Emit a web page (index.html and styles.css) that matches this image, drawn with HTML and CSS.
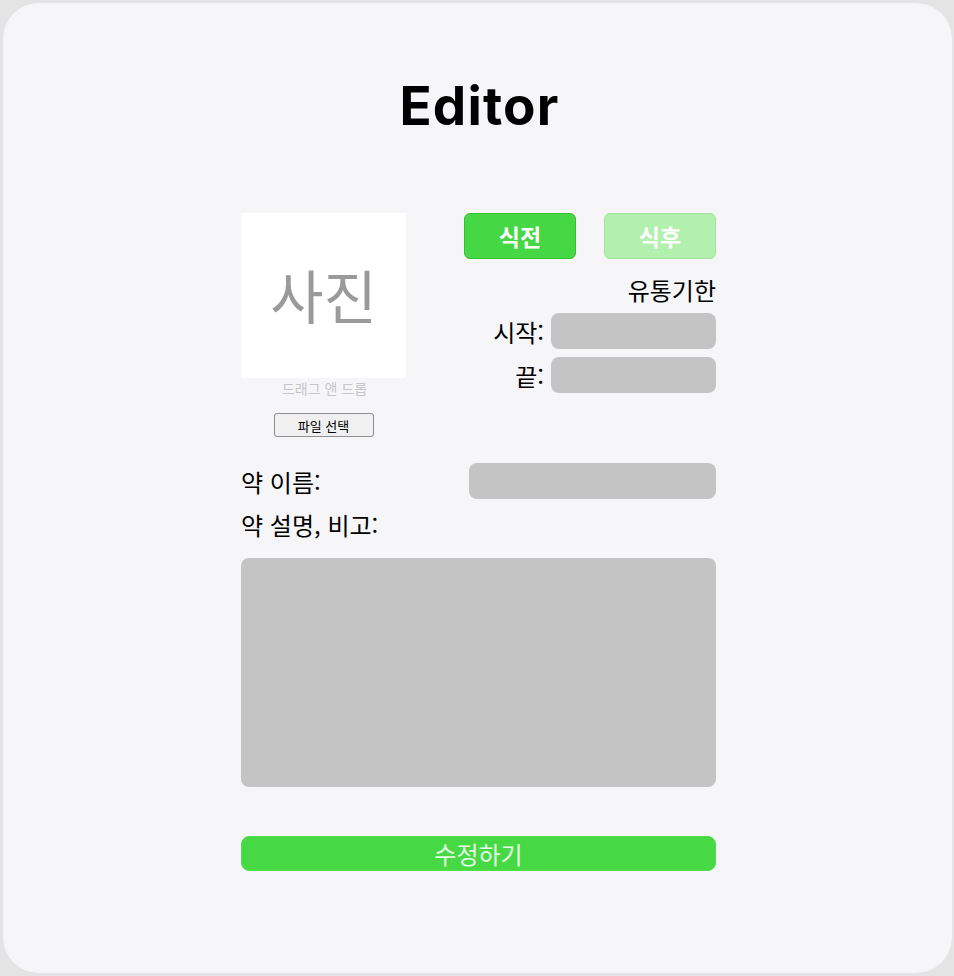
FILE: index.html
```html
<!DOCTYPE html>
<html lang="ko">

<head>
    <meta charset="UTF-8">
    <meta name="viewport" content="width=device-width, initial-scale=1.0">
    <title>Editor</title>
    <link rel="stylesheet" href="styles.css">
</head>

<body>
    <div class="card">
        <h1 class="title">Editor</h1>

        <div class="editor">
            <!-- 사진 + 복용 시점 + 유통기한 -->
            <div class="top">
                <div class="photo-col">
                    <div class="photo">사진</div>
                    <p class="drop-hint">드래그 앤 드롭</p>
                    <button class="file-btn" type="button">파일 선택</button>
                </div>
                <div class="info-col">
                    <div class="timing">
                        <button class="timing-btn active" type="button">식전</button>
                        <button class="timing-btn" type="button">식후</button>
                    </div>
                    <p class="expire-title">유통기한</p>
                    <div class="field-row">
                        <label>시작:</label>
                        <div class="input short"></div>
                    </div>
                    <div class="field-row">
                        <label>끝:</label>
                        <div class="input short"></div>
                    </div>
                </div>
            </div>

            <div class="name-row">
                <label>약 이름:</label>
                <div class="input name"></div>
            </div>
            <label class="desc-label">약 설명, 비고:</label>
            <div class="textarea"></div>

            <button class="submit" type="button">수정하기</button>
        </div>
    </div>
</body>

</html>
```

FILE: styles.css
```css
html * {
    margin: 0;
    padding: 0;
    box-sizing: border-box;
}

body {
    background: #e4e4e4;
    font-family: "Noto Sans CJK KR", "Noto Sans", sans-serif;
    color: #000;
}

.card {
    margin: 3px 2px 3px 3px;
    height: 970px;
    border-radius: 36px;
    background: #f6f6f8;
    padding-top: 68px;
}

.title {
    font-family: Inter, sans-serif;
    font-size: 53px;
    font-weight: 700;
    letter-spacing: 1.2px;
    text-align: center;
    line-height: 70px;
    padding-left: 4px;
}

.editor {
    width: 475px;
    margin: 72px 0 0 238px;
}

/* 상단 영역 */
.top {
    display: flex;
    justify-content: space-between;
}

.photo-col {
    width: 165px;
    display: flex;
    flex-direction: column;
    align-items: center;
}

.photo {
    width: 165px;
    height: 165px;
    background: #fff;
    color: #9a9a9a;
    font-size: 58px;
    display: flex;
    align-items: center;
    justify-content: center;
    padding-bottom: 4px;
}

.drop-hint {
    font-size: 14px;
    color: #c6c6c6;
    line-height: 20px;
    margin-left: 2px;
}

.file-btn {
    margin-top: 15px;
    width: 100px;
    height: 24px;
    font-family: inherit;
    font-size: 13px;
    background: #f0f0f0;
    border: 1px solid #8f8f8f;
    border-radius: 3px;
    color: #000;
}

.info-col {
    width: 252px;
    display: flex;
    flex-direction: column;
    align-items: flex-end;
}

.timing {
    width: 100%;
    display: flex;
    justify-content: space-between;
}

.timing-btn {
    width: 112px;
    height: 46px;
    border-radius: 6px;
    font-family: inherit;
    font-size: 23px;
    font-weight: 700;
    color: #fff;
    background: #b1f0ad;
    border: 1px solid #a2e39d;
}

.timing-btn.active {
    background: #46d844;
    border-color: #36c034;
}

.expire-title {
    font-size: 24px;
    line-height: 32px;
    margin-top: 15px;
}

.field-row {
    display: flex;
    align-items: center;
    gap: 7px;
    height: 36px;
    font-size: 24px;
    margin-top: 7px;
}

.field-row + .field-row {
    margin-top: 8px;
}

.input {
    background: #c4c4c4;
    border-radius: 8px;
    height: 36px;
}

.input.short {
    width: 165px;
}

.name-row {
    display: flex;
    justify-content: space-between;
    align-items: center;
    margin-top: 26px;
    font-size: 24px;
}

.input.name {
    width: 247px;
}

.desc-label {
    display: block;
    font-size: 24px;
    line-height: 32px;
    margin-top: 10px;
}

.textarea {
    margin-top: 17px;
    height: 229px;
    background: #c4c4c4;
    border-radius: 8px;
}

.submit {
    display: block;
    width: 100%;
    height: 35px;
    margin-top: 49px;
    background: #46d944;
    border: 1px solid #52e04e;
    border-radius: 8px;
    color: #e4fbe4;
    font-family: inherit;
    font-size: 24px;
    line-height: 30px;
}
```
